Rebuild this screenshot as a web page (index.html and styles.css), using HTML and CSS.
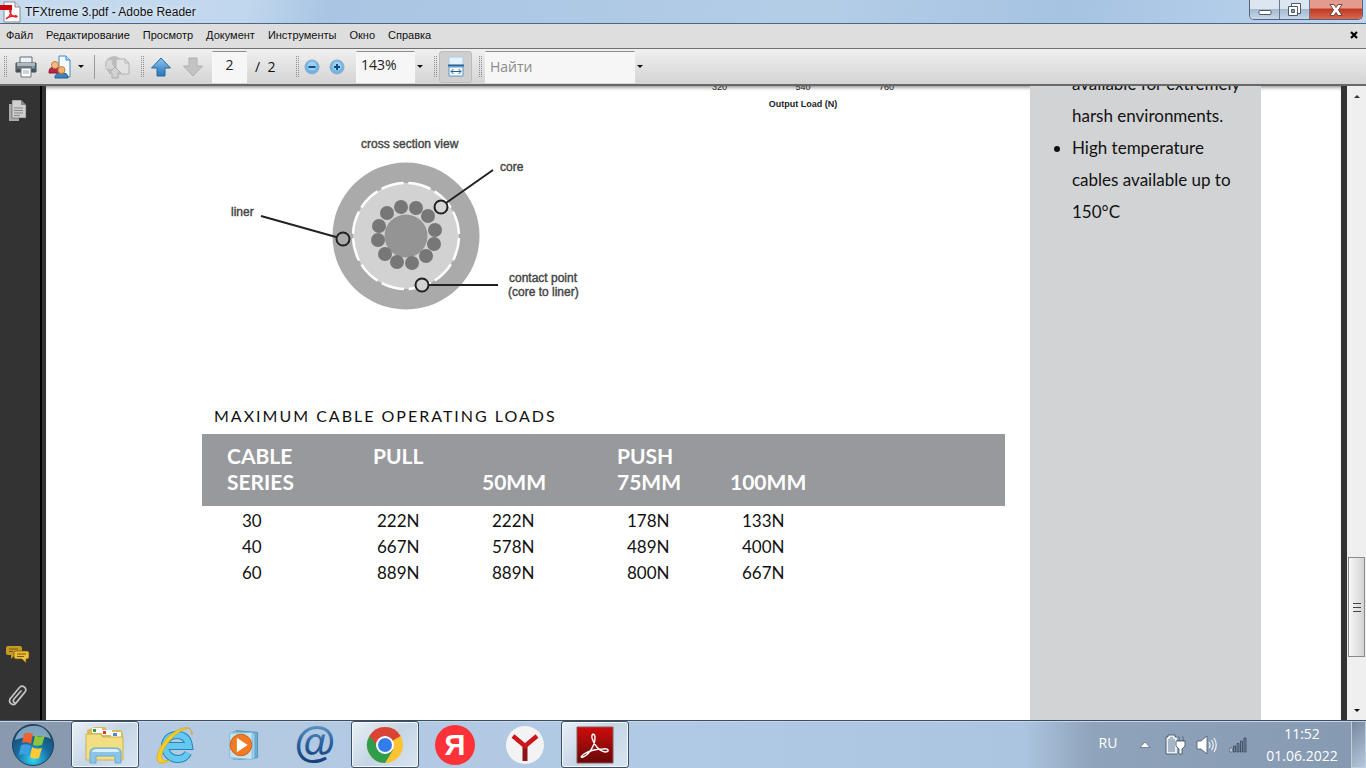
FILE: index.html
```html
<!DOCTYPE html>
<html lang="ru">
<head>
<meta charset="utf-8">
<title>TFXtreme 3.pdf - Adobe Reader</title>
<link rel="stylesheet" href="styles.css">
</head>
<body>
<header class="titlebar">
  <svg class="title-icon" width="22" height="22" viewBox="0 0 22 22" aria-hidden="true">
    <path d="M4 1h11l5 5v15H4z" fill="#fafafa" stroke="#8b8b8b"/>
    <path d="M15 1v5h5" fill="#ddd" stroke="#8b8b8b"/>
    <path d="M0 4h12v5H0z" fill="#c80a10"/>
    <path d="M6 18c3-1 5-5 5-8 0-2-2-1-1 1 1 3 3 5 6 5 2 0 1-2-2-1-3 0-6 1-8 3z" fill="none" stroke="#e0202a" stroke-width="1.3"/>
  </svg>
  <h1 class="title-text">TFXtreme 3.pdf - Adobe Reader</h1>
  <div class="window-buttons">
    <button class="win-btn" aria-label="Свернуть"><svg width="16" height="16" viewBox="0 0 16 16"><rect x="2" y="8.500" width="12" height="4" rx="1" fill="#fff" stroke="#4c5a6c"/></svg></button>
    <button class="win-btn" aria-label="Восстановить"><svg width="16" height="16" viewBox="0 0 16 16"><path d="M4.500 1.500h9v10h-9z" fill="#fff" stroke="#4c5a6c"/><path d="M1.500 4.500h9v9h-9z" fill="#fff" stroke="#4c5a6c"/><path d="M4.500 7.500h3v3h-3z" fill="#8fa3ba" stroke="#4c5a6c"/></svg></button>
    <button class="win-btn win-close" aria-label="Закрыть"><svg width="16" height="16" viewBox="0 0 16 16"><path d="M2 2.500h4l2 3 2-3h4L10.500 8l3.500 5.500h-4l-2-3-2 3H2L5.500 8z" fill="#fff" stroke="#6d4448"/></svg></button>
  </div>
</header>
<nav class="menubar" aria-label="Меню">
  <button class="menu">Файл</button>
  <button class="menu">Редактирование</button>
  <button class="menu">Просмотр</button>
  <button class="menu">Документ</button>
  <button class="menu">Инструменты</button>
  <button class="menu">Окно</button>
  <button class="menu">Справка</button>
  <button class="doc-close" aria-label="Закрыть документ"><svg width="8" height="8" viewBox="0 0 8 8"><path d="M1 1l6 6M7 1L1 7" stroke="#000" stroke-width="2.200"/></svg></button>
</nav>
<div class="toolbar" role="toolbar" aria-label="Панель инструментов">
  <span class="grip"></span>
  <button class="tool tool-wide" aria-label="Печать">
    <svg width="24" height="24" viewBox="0 0 24 24"><path d="M6 2h12v7H6z" fill="#edf3f8" stroke="#60707c"/><path d="M2 8h20v9H2z" fill="#6c777f" stroke="#3e474e"/><path d="M3 8h18v3H3z" fill="#aeb8bf"/><path d="M3 14h18v3H3z" fill="#454e55"/><path d="M7 13h10v9H7z" fill="#fff" stroke="#68747c"/><path d="M9 16h6M9 18h6" stroke="#9aa6ad"/><circle cx="19" cy="12" r="1" fill="#62c0ee"/></svg>
  </button>
  <button class="tool tool-share" aria-label="Совместная работа">
    <svg width="24" height="24" viewBox="0 0 24 24"><path d="M11 1h7l4 4v17H11z" fill="#f4faff" stroke="#3f86c2"/><path d="M18 1v4h4" fill="#b9dbf3" stroke="#3f86c2"/><path d="M1 18c0-5 2-6 6-6s5 2 5 6z" fill="#b8274b" stroke="#8d183b"/><circle cx="7" cy="10" r="3.500" fill="#f6bd83" stroke="#c77a35"/><path d="M7 23c0-4 2-5 7-5s6 2 6 5z" fill="#3f80bd" stroke="#205a94"/><circle cx="13.500" cy="15" r="3.500" fill="#f7b26a" stroke="#c77a35"/></svg>
    <span class="caret"></span>
  </button>
  <span class="divider"></span>
  <button class="tool tool-globe" aria-label="Отправить" disabled>
    <svg width="26" height="24" viewBox="0 0 26 24"><circle cx="10" cy="10" r="9" fill="#bdbdbd"/><path d="M3 6c4-3 6 0 5 2s3 2 2 5-5 0-8 0" fill="#d7d7d7"/><path d="M12 4h9l4 4v11H12z" fill="#e2e2e2" stroke="#b4b4b4"/><path d="M21 4v4h4" fill="none" stroke="#b4b4b4"/><path d="M8 23v-5H5l6-6 6 6h-3v5z" fill="#d2d2d2" stroke="#aaa"/></svg>
  </button>
  <span class="grip"></span>
  <button class="tool tool-arrow" aria-label="Предыдущая страница"><svg width="22" height="22" viewBox="0 0 22 22"><defs><linearGradient id="up" x2="0" y2="1"><stop stop-color="#8fc5ee"/><stop offset="1" stop-color="#2475bb"/></linearGradient></defs><path d="M11 2L20.500 12H15v8H7v-8H1.500z" fill="url(#up)" stroke="#2b699f"/></svg></button>
  <button class="tool tool-arrow" aria-label="Следующая страница" disabled><svg width="22" height="22" viewBox="0 0 22 22"><path d="M11 20L1.500 10H7V2h8v8h5.500z" fill="#c3c3c3" stroke="#b0b0b0"/></svg></button>
  <input class="field field-page" type="text" value="2" aria-label="Номер страницы">
  <span class="page-total">/&nbsp; 2</span>
  <span class="grip"></span>
  <button class="tool tool-zoom" aria-label="Уменьшить"><svg width="18" height="18" viewBox="0 0 18 18"><circle cx="9" cy="9" r="7" fill="#72b5e5" stroke="#8badc7"/><circle cx="9" cy="8" r="4.500" fill="#9bd0f3"/><path d="M5.500 9h7" stroke="#174e80" stroke-width="2"/></svg></button>
  <button class="tool tool-zoom" aria-label="Увеличить"><svg width="18" height="18" viewBox="0 0 18 18"><circle cx="9" cy="9" r="7" fill="#72b5e5" stroke="#8badc7"/><circle cx="9" cy="8" r="4.500" fill="#9bd0f3"/><path d="M6 9h6M9 6v6" stroke="#174e80" stroke-width="2"/></svg></button>
  <input class="field field-zoom" type="text" value="143%" aria-label="Масштаб">
  <button class="tool tool-caret" aria-label="Выбрать масштаб"><span class="caret"></span></button>
  <span class="grip"></span>
  <button class="tool tool-fit" aria-label="По ширине" aria-pressed="true"><svg width="18" height="22" viewBox="0 0 18 22"><path d="M2 1h14v8H2z" fill="#e6f2fb" stroke="#b2cbdd"/><path d="M1 9.500h16" stroke="#286797" stroke-width="2"/><path d="M2 11h14v9H2z" fill="#f7fbff" stroke="#5b98c6"/><path d="M4 15.500h10M6.500 13L4 15.500 6.500 18M11.500 13l2.500 2.500-2.500 2.500" fill="none" stroke="#245e8e"/></svg></button>
  <span class="grip"></span>
  <input class="field field-find" type="search" placeholder="Найти" aria-label="Найти">
  <button class="tool tool-caret" aria-label="Параметры поиска"><span class="caret"></span></button>
</div>
<main class="workspace">
  <nav class="side-panel" aria-label="Панели">
    <button class="side-btn" aria-label="Страницы"><svg width="20" height="22" viewBox="0 0 20 22"><path d="M1 4h10v17H1z" fill="#aaa"/><path d="M4 0h9l5 5v13H4z" fill="#d0d0d0" stroke="#555" stroke-width=".6"/><path d="M13 0v5h5" fill="#888"/><path d="M6 8h9M6 10.500h9M6 13h9M6 15.500h6" stroke="#888"/></svg></button>
    <span class="side-space"></span>
    <button class="side-btn" aria-label="Комментарии"><svg width="24" height="20" viewBox="0 0 24 20"><path d="M2 2h12q2 0 2 2v5q0 2-2 2H9l-4 4v-4H2q-2 0-2-2V4q0-2 2-2z" fill="#c99a20"/><path d="M10 7h11q2 0 2 2v4q0 2-2 2h-1v4l-4-4h-6q-2 0-2-2V9q0-2 2-2z" fill="#edbf35" stroke="#6c5215" stroke-width=".7"/><path d="M3 5h9M3 7.500h4M11 10h9M11 12.500h7" stroke="#77591a"/></svg></button>
    <button class="side-btn" aria-label="Вложения"><svg width="22" height="24" viewBox="0 0 22 24"><path d="M17 9L9 19c-2 3-8 1-6-4L12 4c3-4 9 0 6 4l-8 10c-2 2-5 0-3-3l7-8" fill="none" stroke="#c3c3c3" stroke-width="1.700" stroke-linecap="round"/></svg></button>
  </nav>
  <div class="page">
    <article class="sheet">
      <div class="axis">
        <div class="axis-values"><span>320</span><span>540</span><span>760</span></div>
        <div class="axis-name">Output Load (N)</div>
      </div>
      <svg class="diagram" width="380" height="190" viewBox="0 0 380 190" role="img" aria-label="cross section view">
        <circle cx="186" cy="106" r="73.500" fill="#aaa"/>
        <circle cx="186" cy="106" r="53" fill="#d2d2d2"/>
        <circle cx="186" cy="106" r="53" fill="none" stroke="#fff" stroke-width="2.500" stroke-dasharray="23 4.750" stroke-dashoffset="-2"/>
        <circle cx="186" cy="106" r="21.500" fill="#949494"/>
        <g fill="#777">
          <circle cx="181" cy="77" r="7"/><circle cx="196" cy="78" r="7"/><circle cx="208" cy="86" r="7"/><circle cx="215" cy="100" r="7"/><circle cx="214" cy="114" r="7"/><circle cx="206" cy="126" r="7"/><circle cx="192" cy="133" r="7"/><circle cx="177" cy="132" r="7"/><circle cx="165" cy="124" r="7"/><circle cx="158" cy="110" r="7"/><circle cx="159" cy="96" r="7"/><circle cx="167" cy="83" r="7"/>
        </g>
        <g fill="none" stroke="#222" stroke-width="2">
          <path d="M41 86l75 21M226 73l47-33M209 155h69"/>
          <circle cx="123" cy="109" r="6.500"/><circle cx="221" cy="77" r="6.500" fill="#d6d6d6"/><circle cx="202" cy="155" r="6.500" fill="#d2d2d2"/>
        </g>
        <g class="diagram-text">
          <text x="141" y="18">cross section view</text>
          <text x="280" y="41">core</text>
          <text x="11" y="86">liner</text>
          <text x="289" y="152">contact point</text>
          <text x="288" y="166">(core to liner)</text>
        </g>
      </svg>
      <section class="loads">
        <h2 class="loads-title">MAXIMUM CABLE OPERATING LOADS</h2>
        <table class="loads-table">
          <colgroup><col class="c-series"><col class="c-pull"><col class="c-50"><col class="c-75"><col></colgroup>
          <thead>
            <tr><th>CABLE</th><th>PULL</th><th></th><th>PUSH</th><th></th></tr>
            <tr><th>SERIES</th><th></th><th>50MM</th><th>75MM</th><th>100MM</th></tr>
          </thead>
          <tbody>
            <tr><td>30</td><td>222N</td><td>222N</td><td>178N</td><td>133N</td></tr>
            <tr><td>40</td><td>667N</td><td>578N</td><td>489N</td><td>400N</td></tr>
            <tr><td>60</td><td>889N</td><td>889N</td><td>800N</td><td>667N</td></tr>
          </tbody>
        </table>
      </section>
    </article>
    <aside class="notes">
      <ul>
        <li class="cont">available for extremely harsh environments.</li>
        <li>High temperature cables available up to 150°C</li>
      </ul>
    </aside>
  </div>
  <div class="scrollbar">
    <button class="scroll-btn" aria-label="Вверх"><span class="caret caret-up"></span></button>
    <div class="scroll-track"><div class="scroll-thumb"><i></i><i></i><i></i></div></div>
    <button class="scroll-btn" aria-label="Вниз"><span class="caret"></span></button>
  </div>
</main>
<footer class="taskbar">
  <button class="start" aria-label="Пуск"><svg width="44" height="44" viewBox="0 0 44 44"><defs><radialGradient id="orb" cx=".5" cy=".85" r=".9"><stop stop-color="#31d5f5"/><stop offset=".45" stop-color="#176d9f"/><stop offset="1" stop-color="#18395e"/></radialGradient></defs><circle cx="22" cy="22" r="20.500" fill="url(#orb)" stroke="#23425e"/><path d="M4 17C7 5 18 2 26 3s12 7 14 13c-10-5-22-3-36 1z" fill="#b9d2e4" opacity=".65"/><path d="M13 11c4-2 7-1 9 0l-2 10c-3-2-6-2-9-1z" fill="#ee6130"/><path d="M24 12c3 2 7 2 10 0l-3 10c-3 1-6 1-9 0z" fill="#8bc63d"/><path d="M10 22c4-1 7-1 10 1l-3 10c-3-2-6-2-9-1z" fill="#3c9fe1"/><path d="M21 24c3 2 7 2 10 1l-3 10c-3 1-7 1-9-1z" fill="#ffcb35"/></svg></button>
  <div class="tasks">
    <button class="task active" aria-label="Проводник"><svg width="44" height="42" viewBox="0 0 44 42"><path d="M4 6l8-3h10l2 3h14l2 3v26H5z" fill="#d9bb58"/><path d="M9 4h10v5H9zM19 6h10v5H19zM28 8h10v5H28z" fill="#fff"/><path d="M10 5h3v3h-3z" fill="#3b964d"/><path d="M20 7h3v3h-3z" fill="#d6372f"/><path d="M30 9h4v3h-4z" fill="#4a8ccf"/><path d="M3 10h14l3 3h20v23H3z" fill="#f2df82" stroke="#cdb157"/><path d="M7 39V29q0-5 5-5h21q5 0 5 5v10h-6v-7H13v7z" fill="#8cc4e8" stroke="#69a9d3"/><path d="M9 28q1-3 4-3h19q4 0 4 3z" fill="#d8effb"/></svg></button>
    <button class="task" aria-label="Internet Explorer"><svg width="44" height="42" viewBox="0 0 44 42"><path d="M12 22h24c-1-7-5-11-12-11S12 15 12 22s5 13 13 13c5 0 8-2 10-6" fill="none" stroke="#2385bd" stroke-width="8"/><path d="M12 22h24c-1-7-5-11-12-11S12 15 12 22s5 13 13 13c5 0 8-2 10-6" fill="none" stroke="#65c9ef" stroke-width="6"/><path d="M39 11C40 1 30 2 20 9S4 28 4 34s6 7 13 2C9 38 7 34 10 27S23 8 32 5c5-2 7 1 7 6z" fill="#f4cd28" stroke="#d5a513" stroke-width=".7"/></svg></button>
    <button class="task" aria-label="Медиаплеер"><svg width="36" height="36" viewBox="0 0 40 40"><path d="M10 4l24 2v28l-22 2z" fill="#69add3" stroke="#4d8fb6"/><path d="M7 5l24 2v28L7 36z" fill="#9ed1ea" stroke="#69a7ca"/><path d="M3 7l25-1v30L3 34z" fill="#c4e4f4" stroke="#83b9d6"/><circle cx="15.500" cy="20" r="12" fill="#f17a23" stroke="#d35d18"/><path d="M11 12l12 8-12 8z" fill="#fff"/></svg></button>
    <button class="task" aria-label="Почта"><svg width="44" height="44" viewBox="0 0 44 44"><defs><linearGradient id="at" x2="0" y2="1"><stop stop-color="#6ea6d2"/><stop offset=".5" stop-color="#2c619f"/><stop offset="1" stop-color="#12386f"/></linearGradient></defs><text class="at-sign" x="22" y="34" text-anchor="middle" fill="url(#at)">@</text></svg></button>
    <button class="task active" aria-label="Google Chrome"><svg width="38" height="38" viewBox="0 0 38 38"><circle cx="19" cy="19" r="18" fill="#fbc32f"/><path d="M19 19L3.400 10A18 18 0 0 0 19 37l8-13z" fill="#2f9d4c"/><path d="M19 19H11L3.400 10a18 18 0 0 1 31.200 0z" fill="#da4437"/><circle cx="19" cy="19" r="9" fill="#fff"/><circle cx="19" cy="19" r="7" fill="#327de9"/></svg></button>
    <button class="task" aria-label="Яндекс"><svg width="42" height="42" viewBox="0 0 42 42"><circle cx="21" cy="21" r="20" fill="#fc3238"/><text class="ya-sign" x="21" y="31" text-anchor="middle">Я</text></svg></button>
    <button class="task" aria-label="Яндекс Браузер"><svg width="40" height="40" viewBox="0 0 40 40"><circle cx="20" cy="20" r="19" fill="#f3f3f3"/><path d="M20 21v15" stroke="#8f1218" stroke-width="5"/><path d="M8 11l12 10 12-10" fill="none" stroke="#cc151c" stroke-width="4.500"/></svg></button>
    <button class="task active" aria-label="Adobe Reader"><svg width="38" height="38" viewBox="0 0 38 38"><defs><linearGradient id="pdf" x2="0" y2="1"><stop stop-color="#ce0c0c"/><stop offset="1" stop-color="#670808"/></linearGradient></defs><path d="M1 1h36v36H1z" fill="url(#pdf)" stroke="#8c5757"/><path d="M7 31c6-2 12-12 12-19 0-5-4-5-3 0 2 7 7 13 13 14 5 0 4-4-2-3-7 0-14 2-19 5-4 3-3 4-1 3z" fill="none" stroke="#fff" stroke-width="1.400"/></svg></button>
  </div>
  <div class="tray">
    <button class="lang">RU</button>
    <button class="tray-btn" aria-label="Скрытые значки"><svg width="12" height="8" viewBox="0 0 12 8"><path d="M6 1l5 5.500H1z" fill="#fff" stroke="#56677b" stroke-width=".7"/></svg></button>
    <button class="tray-btn" aria-label="Питание"><svg width="22" height="22" viewBox="0 0 22 22"><path d="M2 4h2V2h5v2h2v15H2z" fill="#a7b5c5" stroke="#fff" stroke-width="1.500"/><path d="M1 3h2V1h7v2h2M1 3v17h11" fill="none" stroke="#34465a" stroke-width=".7"/><path d="M11 7h9v5l-3 3v5h-3v-5l-3-3zM13 3h1v4M17 3h1v4" fill="#fff" stroke="#34465a" stroke-width=".8"/></svg></button>
    <button class="tray-btn" aria-label="Громкость"><svg width="22" height="20" viewBox="0 0 22 20"><path d="M1 6h4l6-5v18l-6-5H1z" fill="#fff" stroke="#44566a" stroke-width=".8"/><path d="M13 7q2 3 0 6M15.500 5q3.500 5 0 10M18 3q4.500 7 0 14" fill="none" stroke="#e6edf5" stroke-width="1.300"/></svg></button>
    <button class="tray-btn" aria-label="Сеть"><svg width="18" height="16" viewBox="0 0 18 16"><path d="M1 11h2v4H1z" fill="#fff" stroke="#44566a" stroke-width=".7"/><path d="M4.500 9h2v6h-2zM8 6.500h2V15H8zM11.500 4h2v11h-2zM15 1h2v14h-2z" fill="#73859a" stroke="#35475b" stroke-width=".8"/></svg></button>
    <button class="clock"><span>11:52</span><span>01.06.2022</span></button>
    <button class="show-desktop" aria-label="Показать рабочий стол"></button>
  </div>
</footer>
</body>
</html>
```
FILE: styles.css
```css
* { box-sizing: border-box; }

body {
  margin: 0;
  height: 100vh;
  display: flex;
  flex-direction: column;
  overflow: hidden;
  font-family: "Open Sans", "Noto Sans", sans-serif;
  font-size: 11px;
  color: #111;
}

button {
  margin: 0;
  padding: 0;
  border: 0;
  background: none;
  font: inherit;
  color: inherit;
  display: flex;
  align-items: center;
  justify-content: center;
}

svg { display: block; flex: none; }

/* Title bar */
.titlebar {
  flex: none;
  height: 24px;
  display: flex;
  align-items: center;
  padding-right: 3px;
  border-bottom: 1px solid #4d6687;
  background: linear-gradient(100deg, #c6dbef 0%, #c1d7ed 18%, #a9c5e3 24%, #b4cde7 60%, #a6c3e2 78%, #bdd5ee 100%);
}
.title-icon { margin-right: 3px; }
.title-text {
  margin: 0;
  flex: 1;
  font: 12px "Liberation Sans", sans-serif;
  text-shadow: 0 0 6px #fff;
}
.window-buttons {
  align-self: flex-start;
  display: flex;
  height: 20px;
  border: 1px solid #53657b;
  border-top: 0;
  border-radius: 0 0 5px 5px;
  overflow: hidden;
}
.win-btn {
  width: 30px;
  border-right: 1px solid #65788f;
  background: linear-gradient(#dce6f1 0 45%, #a6b9ce 50%, #c6d8ea);
}
.win-close {
  width: 52px;
  border-right: 0;
  background: linear-gradient(#e29b8c 0 40%, #c03a22 50%, #d96950);
}

/* Menu */
.menubar {
  flex: none;
  height: 25px;
  display: flex;
  align-items: center;
  gap: 13px;
  padding: 0 8px 2px 6px;
  background: #dedede;
  border-bottom: 1px solid #717171;
  font-family: "Liberation Sans", sans-serif;
}
.doc-close { margin-left: auto; }

/* Toolbar */
.toolbar {
  flex: none;
  height: 37px;
  display: flex;
  align-items: center;
  padding-left: 3px;
  background: linear-gradient(#f0f0f0, #d4d4d4);
  border-bottom: 2px solid #686868;
}
.grip {
  flex: none;
  width: 4px;
  height: 22px;
  background: conic-gradient(#8c8c8c 25%, transparent 0) 0 0 / 2px 2px;
}
.tool { flex: none; height: 30px; }
.tool-wide { width: 38px; }
.tool-share { width: 42px; gap: 6px; }
.divider { width: 1px; height: 24px; margin: 0 7px; background: #9a9a9a; }
.tool-globe { width: 30px; margin-right: 8px; }
.tool-arrow { width: 30px; margin-left: 2px; }
.tool-zoom { width: 25px; }
.tool-caret { width: 10px; margin-right: 8px; }
.tool-fit {
  width: 33px;
  height: 32px;
  margin: 0 6px 0 2px;
  border: 1px solid #bdbdbd;
  border-radius: 3px;
  background: #cfcfcf;
}
.caret {
  border: 3px solid transparent;
  border-top-color: #111;
  border-bottom: 0;
}
.caret-up {
  border-top: 0;
  border-bottom: 3px solid #333;
}
.field {
  flex: none;
  height: 32px;
  margin: 0;
  padding: 0 6px 4px;
  border: 1px solid #f8f8f8;
  border-top-color: #8d8d8d;
  border-radius: 0;
  background: #f6f6f6;
  font: 14px "Open Sans", sans-serif;
  color: #222;
  appearance: none;
}
.field-page { width: 35px; margin-left: 4px; text-align: center; }
.page-total { width: 48px; padding-left: 8px; font-size: 14px; white-space: nowrap; }
.field-zoom { width: 59px; margin-left: 7px; padding-left: 4px; }
.field-find { width: 150px; margin-left: 3px; padding-left: 4px; padding-bottom: 0; }
.field-find::placeholder { color: #8b8b8b; opacity: 1; }

/* Workspace */
.workspace {
  flex: 1;
  min-height: 0;
  display: flex;
  background: #333;
}
.side-panel {
  flex: none;
  width: 42px;
  margin-right: 4px;
  padding: 14px 4px 12px 0;
  border-right: 2px solid #000;
  display: flex;
  flex-direction: column;
  gap: 20px;
}
.side-space { flex: 1; }
.page {
  flex: 1;
  min-width: 0;
  display: flex;
  padding-right: 80px;
  overflow: hidden;
  background: #fff;
  box-shadow: inset 0 4px 4px -3px #777;
}
.sheet { flex: 1; min-width: 0; padding: 0 25px 0 156px; }
.axis {
  width: 200px;
  margin: -6px 0 0 501px;
  text-align: center;
  font: 9px "Liberation Sans", sans-serif;
  color: #222;
}
.axis-values { display: flex; justify-content: space-between; padding: 0 9px; line-height: 14px; }
.axis-name { font-weight: bold; line-height: 20px; }
.diagram { margin: 16px 0 0 18px; }
.diagram-text {
  font: 12px "Liberation Sans", sans-serif;
  fill: #444;
  stroke: #444;
  stroke-width: .4px;
}
.loads { margin-top: 84px; font-family: Lato, sans-serif; }
.loads-title {
  margin: 0 0 6px 12px;
  font-size: 16px;
  line-height: 24px;
  font-weight: 400;
  letter-spacing: 2px;
  white-space: nowrap;
}
.loads-table {
  width: 100%;
  table-layout: fixed;
  border-collapse: collapse;
  font-size: 17px;
  line-height: 26px;
}
.c-series { width: 171px; }
.c-pull { width: 109px; }
.c-50 { width: 135px; }
.c-75 { width: 113px; }
.loads-table thead { background: #98999d; color: #fff; font-size: 21px; }
.loads-table th { padding: 0; text-align: left; font-weight: 700; height: 26px; }
.loads-table tr:first-child th { padding-top: 9px; }
.loads-table tr:last-child th { padding-bottom: 11px; }
.loads-table td { padding: 0 0 0 10px; }
.loads-table th:first-child { padding-left: 25px; }
.loads-table td:first-child { padding-left: 40px; }
.loads-table td:nth-child(2) { padding-left: 4px; }
.loads-table td:last-child { padding-left: 12px; }
.loads-table tbody tr:first-child td { padding-top: 2px; }
.notes {
  flex: none;
  width: 231px;
  padding: 0 20px 0 24px;
  background: #d1d3d4;
  font: 17px/32px Lato, sans-serif;
}
.notes ul { margin: -18px 0 0; padding: 0 0 0 18px; }
.notes li.cont { list-style: none; }

.scrollbar {
  flex: none;
  width: 19px;
  margin-left: 6px;
  display: flex;
  flex-direction: column;
  background: #efefef;
}
.scroll-btn { height: 20px; }
.scroll-track { flex: 1; display: flex; flex-direction: column; justify-content: flex-end; padding-bottom: 43px; }
.scroll-thumb {
  height: 100px;
  margin: 0 1px;
  border: 1px solid #8a8a8a;
  background: linear-gradient(90deg, #f7f7f7, #d3d3d3);
  display: flex;
  flex-direction: column;
  align-items: center;
  justify-content: center;
  gap: 3px;
}
.scroll-thumb i { width: 8px; height: 1px; background: #444; }

/* Taskbar */
.taskbar {
  flex: none;
  height: 48px;
  display: flex;
  border-top: 1px solid #3d4d60;
  background: linear-gradient(90deg, #8999ae 0 71px, #b5cae2 72px, #b0c9e4 50%, #abc4df 75%, #8fa3ba 80%, #8599b0);
  box-shadow: inset 0 1px 0 #c9d8e8;
}
.start { width: 66px; margin-right: 5px; }
.tasks { display: flex; gap: 2px; }
.task { width: 68px; border-radius: 3px; }
.task.active {
  border: 1px solid #3f5064;
  background: linear-gradient(135deg, #e9f0f7, #c5d5e6 50%, #d8e4f0);
  box-shadow: inset 0 0 0 1px #f3f8fc;
}
.at-sign { font: bold 42px "Liberation Sans", sans-serif; }
.ya-sign { font: bold 29px "Liberation Sans", sans-serif; fill: #fff; }
.tray {
  margin-left: auto;
  display: flex;
  align-items: center;
  color: #fff;
}
.lang { width: 42px; font-size: 14px; padding-bottom: 4px; }
.tray-btn { width: 31px; height: 30px; }
.clock { width: 98px; flex-direction: column; font-size: 14px; line-height: 22px; }
.show-desktop {
  width: 15px;
  height: 100%;
  border: 1px solid #c0cfdf;
  background: linear-gradient(135deg, #76899f, #b5c7da);
}
```
